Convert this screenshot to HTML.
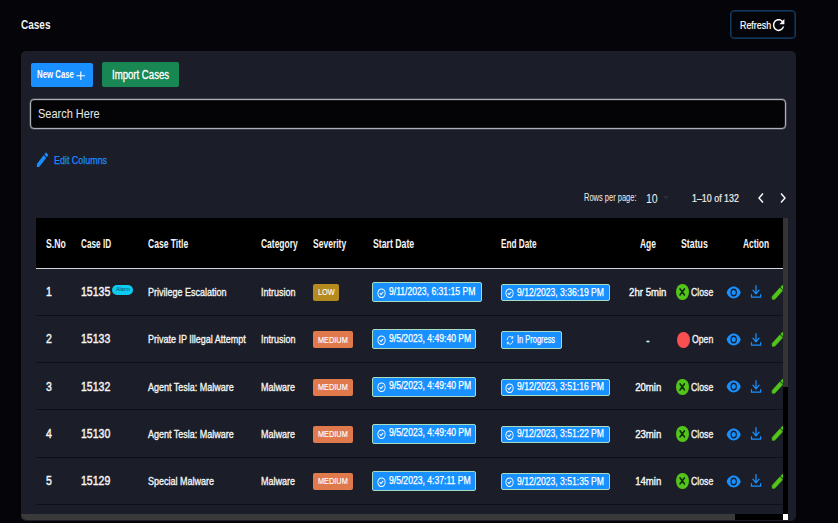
<!DOCTYPE html>
<html lang="en"><head><meta charset="utf-8"><title>Cases</title>
<style>
*{box-sizing:border-box;margin:0;padding:0}
html,body{width:838px;height:523px;overflow:hidden;background:#050509;font-family:"Liberation Sans",sans-serif;color:#fff}
.c{display:inline-block;white-space:nowrap;transform:scaleX(.8);transform-origin:0 50%}
.abs{position:absolute}
.title{position:absolute;left:20.600px;top:17px;font-size:13px;font-weight:bold;line-height:16px;color:#f2f2f2}
.title .c{transform:scaleX(.77)}
.refresh{position:absolute;left:730px;top:10px;width:66px;height:29px;border:1px solid #11375d;box-shadow:inset 0 0 0 .700px #0e2f52;border-radius:4px;background:#050509}
.refresh .c{position:absolute;left:9px;top:6px;font-size:11.500px;line-height:16px;transform:scaleX(.772);-webkit-text-stroke:.2px #fff}
.refresh svg{position:absolute;left:39.100px;top:4.500px}
.card{position:absolute;left:21px;top:51px;width:775px;height:470px;background:#1b1e28;border-radius:5px;overflow:hidden}
.btn{position:absolute;border-radius:2px;color:#fff;font-weight:bold}
.new{left:9.500px;top:12px;width:62.200px;height:24px;background:#1890ff}
.new .c{position:absolute;left:6.5px;top:4px;font-size:10.5px;line-height:14px;transform:scaleX(.745)}
.new svg{position:absolute;left:45px;top:7.600px}
.imp{left:80.5px;top:11px;width:77px;height:25px;background:#198754}
.imp .c{position:absolute;left:10px;top:5px;font-size:12px;line-height:16px;font-weight:normal;transform:scaleX(.80);-webkit-text-stroke:.3px #fff}
.search{position:absolute;left:9px;top:48px;width:756px;height:30px;border:1px solid #aeb0b6;box-shadow:0 0 0 .5px rgba(150,152,160,.55),inset 0 0 0 .5px rgba(150,152,160,.35);border-radius:4px;background:#040407}
.search .c{position:absolute;left:7px;top:6px;font-size:13px;line-height:16px;color:#e8e8ea;transform:scaleX(.845)}
.editc{position:absolute;left:16px;top:101px;color:#1a8cff}
.editc svg{position:absolute;left:-1.900px;top:-2.300px}
.editc .c{position:absolute;left:17px;top:1px;font-size:11.5px;line-height:14px;transform:scaleX(.776);-webkit-text-stroke:.25px #1a8cff}
.pag{position:absolute;top:140px;font-size:10px;line-height:14px;color:#f0f0f0}
.tbl{position:absolute;left:36px;top:218px;width:747px;height:296px;overflow:hidden;background:#1b1e28}
.thead{position:absolute;left:0;top:0;width:747px;height:51px;background:#000;border-bottom:1px solid #d4d6d9}
.th{position:absolute;top:17.500px;font-size:12px;line-height:16px;font-weight:bold;color:#f4f4f4;transform:scaleX(.78)}
.tr{position:absolute;left:0;width:747px;height:47.900px;border-bottom:1.200px solid #0e1016}
.td{position:absolute;top:16px;font-size:11.600px;line-height:16px;color:#f6f6f6;transform:scaleX(.775);-webkit-text-stroke:.35px #f6f6f6}
.td.st{transform:scaleX(.75)}
.td.id{font-size:12px;-webkit-text-stroke:.4px #f6f6f6;transform:scaleX(.878)}
.alarm{position:absolute;left:76px;top:17px;width:20.5px;height:9.5px;border-radius:5px;background:#0dcaf0;color:#0a3d4a;overflow:hidden}
.alarm .c{position:absolute;left:3.500px;top:1.200px;font-size:5.800px;line-height:7px;transform:scaleX(.93);color:#0a4a5c}
.sev{position:absolute;left:276.5px;top:16px;height:17px;border-radius:2px;color:#fff}
.sev .c{position:absolute;left:5.500px;top:2.400px;font-size:9.600px;line-height:12px;transform:scaleX(.765);-webkit-text-stroke:.15px #fff}
.sev.low{width:26.5px;background:#b58a1f}
.sev.medium{width:40px;background:#e07a4d}
.chip{position:absolute;background:#1890ff;border:1px solid #a7dcc0;border-radius:2px;color:#fff;white-space:nowrap;font-weight:bold}
.chip.sd{left:336px;top:14px;height:20px}
.chip.sd .ico{position:absolute;left:3.500px;top:4.600px}
.chip.sd .ct{position:absolute;left:15.900px;top:2.500px;font-size:10px;line-height:12px;font-weight:normal;-webkit-text-stroke:.25px #fff;display:inline-block;transform:scaleX(.86);transform-origin:0 50%}
.chip.ed{left:465px;top:16px;height:17.300px;width:109px}
.chip.ed.ip{width:60.500px}
.chip.ed .ico{position:absolute;left:3.300px;top:3.100px}
.chip.ed.ip .ico{left:4px;top:3px}
.chip.ed .ce{position:absolute;left:15.200px;top:1.700px;font-size:10px;line-height:12px;font-weight:normal;-webkit-text-stroke:.25px #fff;transform:scaleX(.86)}
.chip.ed.ip .ce{transform:scaleX(.745)}
.age{position:absolute;left:572px;width:80px;top:16.300px;text-align:center;font-size:11.200px;line-height:16px;color:#f6f6f6;-webkit-text-stroke:.4px #f6f6f6}
.cc{transform-origin:50% 50%;transform:scaleX(.857)}
.dot{position:absolute;left:640.400px;top:16.300px;width:12.400px;height:15.800px;border-radius:50%}
.dot svg{position:absolute;left:0;top:0;width:12.400px;height:15.800px}
.dot.close{background:#52c41a}
.dot.open{background:#fa4f50;left:641px;width:12.800px;height:16.200px}
.eye{position:absolute;left:690.300px;top:14.950px}
.dl{position:absolute;left:713.900px;top:17.300px}
.pen{position:absolute;left:734px;top:14.500px}

</style></head><body>
<div class="title"><span class="c">Cases</span></div>
<div class="refresh"><span class="c">Refresh</span>
<svg viewBox="0 0 24 24" width="17.250" height="18.200" preserveAspectRatio="none"><path fill="#fff" d="M17.650 6.350C16.200 4.900 14.210 4 12 4c-4.420 0-7.990 3.580-7.990 8s3.570 8 7.990 8c3.730 0 6.840-2.550 7.730-6h-2.080c-.820 2.330-3.040 4-5.650 4-3.310 0-6-2.690-6-6s2.690-6 6-6c1.660 0 3.140.690 4.220 1.780L13 11h7V4l-2.350 2.350z"/></svg>
</div>
<div class="card">
<div class="btn new"><span class="c">New Case</span><svg viewBox="0 0 10 10" width="9.600" height="9.600"><path d="M5 .5v9M.5 5h9" stroke="#fff" stroke-width="1.150"/></svg></div>
<div class="btn imp"><span class="c">Import Cases</span></div>
<div class="search"><span class="c">Search Here</span></div>
<div class="editc"><svg viewBox="0 0 24 24" width="15" height="19.500" preserveAspectRatio="none"><path fill="#1a8cff" d="M3 17.250V21h3.750L17.810 9.940l-3.750-3.750L3 17.250zM20.710 7.040a.996.996 0 0 0 0-1.410l-2.340-2.340a.996.996 0 0 0-1.410 0l-1.830 1.830 3.750 3.750 1.830-1.830z"/></svg><span class="c">Edit Columns</span></div>
<span class="c pag" style="left:563.300px;transform:scaleX(.75)">Rows per page:</span>
<span class="c pag" style="left:625.300px;font-size:12px;top:140.500px;transform:scaleX(.88)">10</span>
<svg class="abs" style="left:642px;top:145px" viewBox="0 0 10 6" width="6" height="3.500"><path d="M0 0h10L5 6z" fill="#2b2e39"/></svg>
<span class="c pag" style="left:671px;font-size:10.500px;transform:scaleX(.845);-webkit-text-stroke:.2px #f0f0f0">1–10 of 132</span>
<svg class="abs" style="left:736px;top:141px" viewBox="0 0 8 12" width="8" height="12"><path d="M6 1.500L2 6l4 4.500" fill="none" stroke="#fff" stroke-width="1.400"/></svg>
<svg class="abs" style="left:758px;top:141px" viewBox="0 0 8 12" width="8" height="12"><path d="M2 1.500L6 6l-4 4.500" fill="none" stroke="#fff" stroke-width="1.400"/></svg>
</div>
<div class="tbl">
<div class="thead">
<span class="c th" style="left:10.3px;transform:scaleX(0.725)">S.No</span>
<span class="c th" style="left:45.0px;transform:scaleX(0.684)">Case ID</span>
<span class="c th" style="left:111.6px;transform:scaleX(0.711)">Case Title</span>
<span class="c th" style="left:225.3px;transform:scaleX(0.705)">Category</span>
<span class="c th" style="left:277.0px;transform:scaleX(0.711)">Severity</span>
<span class="c th" style="left:336.5px;transform:scaleX(0.727)">Start Date</span>
<span class="c th" style="left:465.3px;transform:scaleX(0.686)">End Date</span>
<span class="c th" style="left:603.5px;transform:scaleX(0.705)">Age</span>
<span class="c th" style="left:645.2px;transform:scaleX(0.731)">Status</span>
<span class="c th" style="left:707.0px;transform:scaleX(0.697)">Action</span>
</div>
<div class="tr" style="top:50.00px">
<span class="c td id" style="left:10.300px">1</span>
<span class="c td id" style="left:44.8px">15135</span>
<span class="alarm"><span class="c">Alarm</span></span>
<span class="c td" style="left:111.7px">Privilege Escalation</span>
<span class="c td" style="left:225.3px">Intrusion</span>
<span class="sev low"><span class="c">LOW</span></span>
<span class="chip sd" style="width:110px"><svg class="ico" viewBox="0 0 16 16" width="9" height="10.500" preserveAspectRatio="none"><circle cx="8" cy="8" r="6.500" fill="none" stroke="#fff" stroke-width="1.600"/><path d="M5.300 8.300l1.900 1.900 3.400-3.800" fill="none" stroke="#fff" stroke-width="1.600" stroke-linecap="round" stroke-linejoin="round"/></svg><span class="ct">9/11/2023, 6:31:15 PM</span></span>
<span class="chip ed"><svg class="ico" viewBox="0 0 16 16" width="9" height="10.500" preserveAspectRatio="none"><circle cx="8" cy="8" r="6.500" fill="none" stroke="#fff" stroke-width="1.600"/><path d="M5.300 8.300l1.900 1.900 3.400-3.800" fill="none" stroke="#fff" stroke-width="1.600" stroke-linecap="round" stroke-linejoin="round"/></svg><span class="c ce">9/12/2023, 3:36:19 PM</span></span>
<span class="age"><span class="c cc">2hr 5min</span></span>
<span class="dot close"><svg viewBox="0 0 12 12" preserveAspectRatio="none"><path d="M3.900 3.700l4.300 4.600M8.200 3.700l-4.300 4.600" stroke="#0c2b06" stroke-width="1.400" stroke-linecap="round"/></svg></span>
<span class="c td st" style="left:654.6px">Close</span>
<svg class="eye" viewBox="0 0 24 24" width="15.400" height="19" preserveAspectRatio="none"><path fill="#1890ff" fill-rule="evenodd" d="M1 12C2.730 7.610 7 4.500 12 4.500s9.270 3.110 11 7.500c-1.730 4.390-6 7.500-11 7.500S2.730 16.390 1 12zM12 7a5 5 0 1 0 0 10 5 5 0 0 0 0-10z"/><circle cx="12" cy="12" r="3.250" fill="#1890ff"/></svg><svg class="dl" viewBox="0 0 16 16" width="12" height="14.300" preserveAspectRatio="none"><path d="M8 .800v9.200M3.900 5.800L8 10l4.100-4.200" fill="none" stroke="#1890ff" stroke-width="1.250" stroke-linecap="round" stroke-linejoin="round" vector-effect="non-scaling-stroke"/><path d="M2 10.800v2.800h12.200v-2.800" fill="none" stroke="#1890ff" stroke-width="1.250" stroke-linecap="round" stroke-linejoin="round" vector-effect="non-scaling-stroke"/></svg><svg class="pen" viewBox="0 0 24 24" width="17" height="18.700" preserveAspectRatio="none"><path fill="#52c41a" stroke="#52c41a" stroke-width=".700" stroke-linejoin="round" d="M3 17.250V21h3.750L17.810 9.940l-3.750-3.750L3 17.250zM20.710 7.040a.996.996 0 0 0 0-1.410l-2.340-2.340a.996.996 0 0 0-1.410 0l-1.830 1.830 3.750 3.750 1.830-1.830z"/></svg>
</div>
<div class="tr" style="top:97.25px">
<span class="c td id" style="left:10.300px">2</span>
<span class="c td id" style="left:44.8px">15133</span>
<span class="c td" style="left:111.7px">Private IP Illegal Attempt</span>
<span class="c td" style="left:225.3px">Intrusion</span>
<span class="sev medium"><span class="c">MEDIUM</span></span>
<span class="chip sd" style="width:104.3px"><svg class="ico" viewBox="0 0 16 16" width="9" height="10.500" preserveAspectRatio="none"><circle cx="8" cy="8" r="6.500" fill="none" stroke="#fff" stroke-width="1.600"/><path d="M5.300 8.300l1.900 1.900 3.400-3.800" fill="none" stroke="#fff" stroke-width="1.600" stroke-linecap="round" stroke-linejoin="round"/></svg><span class="ct">9/5/2023, 4:49:40 PM</span></span>
<span class="chip ed ip"><svg class="ico" viewBox="0 0 16 16" width="8" height="10.500" preserveAspectRatio="none"><path d="M2.2 7.2A5.9 5.9 0 0 1 13 4.6M13.8 8.8A5.9 5.9 0 0 1 3 11.4" fill="none" stroke="#fff" stroke-width="1.4" stroke-linecap="round"/><path d="M13.4 2.2v2.8h-2.8M2.6 13.8v-2.8h2.8" fill="none" stroke="#fff" stroke-width="1.4" stroke-linecap="round" stroke-linejoin="round"/></svg><span class="c ce">In Progress</span></span>
<span class="age"><span class="c cc">-</span></span>
<span class="dot open"></span>
<span class="c td st" style="left:655.5px">Open</span>
<svg class="eye" viewBox="0 0 24 24" width="15.400" height="19" preserveAspectRatio="none"><path fill="#1890ff" fill-rule="evenodd" d="M1 12C2.730 7.610 7 4.500 12 4.500s9.270 3.110 11 7.500c-1.730 4.390-6 7.500-11 7.500S2.730 16.390 1 12zM12 7a5 5 0 1 0 0 10 5 5 0 0 0 0-10z"/><circle cx="12" cy="12" r="3.250" fill="#1890ff"/></svg><svg class="dl" viewBox="0 0 16 16" width="12" height="14.300" preserveAspectRatio="none"><path d="M8 .800v9.200M3.900 5.800L8 10l4.100-4.200" fill="none" stroke="#1890ff" stroke-width="1.250" stroke-linecap="round" stroke-linejoin="round" vector-effect="non-scaling-stroke"/><path d="M2 10.800v2.800h12.200v-2.800" fill="none" stroke="#1890ff" stroke-width="1.250" stroke-linecap="round" stroke-linejoin="round" vector-effect="non-scaling-stroke"/></svg><svg class="pen" viewBox="0 0 24 24" width="17" height="18.700" preserveAspectRatio="none"><path fill="#52c41a" stroke="#52c41a" stroke-width=".700" stroke-linejoin="round" d="M3 17.250V21h3.750L17.810 9.940l-3.750-3.750L3 17.250zM20.710 7.040a.996.996 0 0 0 0-1.410l-2.340-2.340a.996.996 0 0 0-1.410 0l-1.830 1.830 3.750 3.750 1.830-1.830z"/></svg>
</div>
<div class="tr" style="top:144.50px">
<span class="c td id" style="left:10.300px">3</span>
<span class="c td id" style="left:44.8px">15132</span>
<span class="c td" style="left:111.7px">Agent Tesla: Malware</span>
<span class="c td" style="left:225.3px">Malware</span>
<span class="sev medium"><span class="c">MEDIUM</span></span>
<span class="chip sd" style="width:104.3px"><svg class="ico" viewBox="0 0 16 16" width="9" height="10.500" preserveAspectRatio="none"><circle cx="8" cy="8" r="6.500" fill="none" stroke="#fff" stroke-width="1.600"/><path d="M5.300 8.300l1.900 1.900 3.400-3.800" fill="none" stroke="#fff" stroke-width="1.600" stroke-linecap="round" stroke-linejoin="round"/></svg><span class="ct">9/5/2023, 4:49:40 PM</span></span>
<span class="chip ed"><svg class="ico" viewBox="0 0 16 16" width="9" height="10.500" preserveAspectRatio="none"><circle cx="8" cy="8" r="6.500" fill="none" stroke="#fff" stroke-width="1.600"/><path d="M5.300 8.300l1.900 1.900 3.400-3.800" fill="none" stroke="#fff" stroke-width="1.600" stroke-linecap="round" stroke-linejoin="round"/></svg><span class="c ce">9/12/2023, 3:51:16 PM</span></span>
<span class="age"><span class="c cc">20min</span></span>
<span class="dot close"><svg viewBox="0 0 12 12" preserveAspectRatio="none"><path d="M3.900 3.700l4.300 4.600M8.200 3.700l-4.300 4.600" stroke="#0c2b06" stroke-width="1.400" stroke-linecap="round"/></svg></span>
<span class="c td st" style="left:654.6px">Close</span>
<svg class="eye" viewBox="0 0 24 24" width="15.400" height="19" preserveAspectRatio="none"><path fill="#1890ff" fill-rule="evenodd" d="M1 12C2.730 7.610 7 4.500 12 4.500s9.270 3.110 11 7.500c-1.730 4.390-6 7.500-11 7.500S2.730 16.390 1 12zM12 7a5 5 0 1 0 0 10 5 5 0 0 0 0-10z"/><circle cx="12" cy="12" r="3.250" fill="#1890ff"/></svg><svg class="dl" viewBox="0 0 16 16" width="12" height="14.300" preserveAspectRatio="none"><path d="M8 .800v9.200M3.900 5.800L8 10l4.100-4.200" fill="none" stroke="#1890ff" stroke-width="1.250" stroke-linecap="round" stroke-linejoin="round" vector-effect="non-scaling-stroke"/><path d="M2 10.800v2.800h12.200v-2.800" fill="none" stroke="#1890ff" stroke-width="1.250" stroke-linecap="round" stroke-linejoin="round" vector-effect="non-scaling-stroke"/></svg><svg class="pen" viewBox="0 0 24 24" width="17" height="18.700" preserveAspectRatio="none"><path fill="#52c41a" stroke="#52c41a" stroke-width=".700" stroke-linejoin="round" d="M3 17.250V21h3.750L17.810 9.940l-3.750-3.750L3 17.250zM20.710 7.040a.996.996 0 0 0 0-1.410l-2.340-2.340a.996.996 0 0 0-1.410 0l-1.830 1.830 3.750 3.750 1.830-1.830z"/></svg>
</div>
<div class="tr" style="top:191.75px">
<span class="c td id" style="left:10.300px">4</span>
<span class="c td id" style="left:44.8px">15130</span>
<span class="c td" style="left:111.7px">Agent Tesla: Malware</span>
<span class="c td" style="left:225.3px">Malware</span>
<span class="sev medium"><span class="c">MEDIUM</span></span>
<span class="chip sd" style="width:104.3px"><svg class="ico" viewBox="0 0 16 16" width="9" height="10.500" preserveAspectRatio="none"><circle cx="8" cy="8" r="6.500" fill="none" stroke="#fff" stroke-width="1.600"/><path d="M5.300 8.300l1.900 1.900 3.400-3.800" fill="none" stroke="#fff" stroke-width="1.600" stroke-linecap="round" stroke-linejoin="round"/></svg><span class="ct">9/5/2023, 4:49:40 PM</span></span>
<span class="chip ed"><svg class="ico" viewBox="0 0 16 16" width="9" height="10.500" preserveAspectRatio="none"><circle cx="8" cy="8" r="6.500" fill="none" stroke="#fff" stroke-width="1.600"/><path d="M5.300 8.300l1.900 1.900 3.400-3.800" fill="none" stroke="#fff" stroke-width="1.600" stroke-linecap="round" stroke-linejoin="round"/></svg><span class="c ce">9/12/2023, 3:51:22 PM</span></span>
<span class="age"><span class="c cc">23min</span></span>
<span class="dot close"><svg viewBox="0 0 12 12" preserveAspectRatio="none"><path d="M3.900 3.700l4.300 4.600M8.200 3.700l-4.300 4.600" stroke="#0c2b06" stroke-width="1.400" stroke-linecap="round"/></svg></span>
<span class="c td st" style="left:654.6px">Close</span>
<svg class="eye" viewBox="0 0 24 24" width="15.400" height="19" preserveAspectRatio="none"><path fill="#1890ff" fill-rule="evenodd" d="M1 12C2.730 7.610 7 4.500 12 4.500s9.270 3.110 11 7.500c-1.730 4.390-6 7.500-11 7.500S2.730 16.390 1 12zM12 7a5 5 0 1 0 0 10 5 5 0 0 0 0-10z"/><circle cx="12" cy="12" r="3.250" fill="#1890ff"/></svg><svg class="dl" viewBox="0 0 16 16" width="12" height="14.300" preserveAspectRatio="none"><path d="M8 .800v9.200M3.900 5.800L8 10l4.100-4.200" fill="none" stroke="#1890ff" stroke-width="1.250" stroke-linecap="round" stroke-linejoin="round" vector-effect="non-scaling-stroke"/><path d="M2 10.800v2.800h12.200v-2.800" fill="none" stroke="#1890ff" stroke-width="1.250" stroke-linecap="round" stroke-linejoin="round" vector-effect="non-scaling-stroke"/></svg><svg class="pen" viewBox="0 0 24 24" width="17" height="18.700" preserveAspectRatio="none"><path fill="#52c41a" stroke="#52c41a" stroke-width=".700" stroke-linejoin="round" d="M3 17.250V21h3.750L17.810 9.940l-3.750-3.750L3 17.250zM20.710 7.040a.996.996 0 0 0 0-1.410l-2.340-2.340a.996.996 0 0 0-1.410 0l-1.830 1.830 3.750 3.750 1.830-1.830z"/></svg>
</div>
<div class="tr" style="top:239.00px">
<span class="c td id" style="left:10.300px">5</span>
<span class="c td id" style="left:44.8px">15129</span>
<span class="c td" style="left:111.7px">Special Malware</span>
<span class="c td" style="left:225.3px">Malware</span>
<span class="sev medium"><span class="c">MEDIUM</span></span>
<span class="chip sd" style="width:104.3px"><svg class="ico" viewBox="0 0 16 16" width="9" height="10.500" preserveAspectRatio="none"><circle cx="8" cy="8" r="6.500" fill="none" stroke="#fff" stroke-width="1.600"/><path d="M5.300 8.300l1.900 1.900 3.400-3.800" fill="none" stroke="#fff" stroke-width="1.600" stroke-linecap="round" stroke-linejoin="round"/></svg><span class="ct">9/5/2023, 4:37:11 PM</span></span>
<span class="chip ed"><svg class="ico" viewBox="0 0 16 16" width="9" height="10.500" preserveAspectRatio="none"><circle cx="8" cy="8" r="6.500" fill="none" stroke="#fff" stroke-width="1.600"/><path d="M5.300 8.300l1.900 1.900 3.400-3.800" fill="none" stroke="#fff" stroke-width="1.600" stroke-linecap="round" stroke-linejoin="round"/></svg><span class="c ce">9/12/2023, 3:51:35 PM</span></span>
<span class="age"><span class="c cc">14min</span></span>
<span class="dot close"><svg viewBox="0 0 12 12" preserveAspectRatio="none"><path d="M3.900 3.700l4.300 4.600M8.200 3.700l-4.300 4.600" stroke="#0c2b06" stroke-width="1.400" stroke-linecap="round"/></svg></span>
<span class="c td st" style="left:654.6px">Close</span>
<svg class="eye" viewBox="0 0 24 24" width="15.400" height="19" preserveAspectRatio="none"><path fill="#1890ff" fill-rule="evenodd" d="M1 12C2.730 7.610 7 4.500 12 4.500s9.270 3.110 11 7.500c-1.730 4.390-6 7.500-11 7.500S2.730 16.390 1 12zM12 7a5 5 0 1 0 0 10 5 5 0 0 0 0-10z"/><circle cx="12" cy="12" r="3.250" fill="#1890ff"/></svg><svg class="dl" viewBox="0 0 16 16" width="12" height="14.300" preserveAspectRatio="none"><path d="M8 .800v9.200M3.900 5.800L8 10l4.100-4.200" fill="none" stroke="#1890ff" stroke-width="1.250" stroke-linecap="round" stroke-linejoin="round" vector-effect="non-scaling-stroke"/><path d="M2 10.800v2.800h12.200v-2.800" fill="none" stroke="#1890ff" stroke-width="1.250" stroke-linecap="round" stroke-linejoin="round" vector-effect="non-scaling-stroke"/></svg><svg class="pen" viewBox="0 0 24 24" width="17" height="18.700" preserveAspectRatio="none"><path fill="#52c41a" stroke="#52c41a" stroke-width=".700" stroke-linejoin="round" d="M3 17.250V21h3.750L17.810 9.940l-3.750-3.750L3 17.250zM20.710 7.040a.996.996 0 0 0 0-1.410l-2.340-2.340a.996.996 0 0 0-1.410 0l-1.830 1.830 3.750 3.750 1.830-1.830z"/></svg>
</div>
<div class="tr" style="top:286.250px;border:0"></div>
</div>
<div class="abs" style="left:783px;top:218px;width:5.300px;height:296px;background:#000"></div>
<div class="abs" style="left:783.200px;top:218px;width:4.900px;height:168.500px;background:#343434"></div>
<div class="abs" style="left:21px;top:514.300px;width:762px;height:6.200px;background:#000;border-bottom-left-radius:5px"></div>
<div class="abs" style="left:21px;top:514.300px;width:714px;height:6.200px;background:#3a3a3a;border-bottom-left-radius:5px"></div>
<div class="abs" style="left:783px;top:514.300px;width:5.300px;height:6.200px;background:#fff"></div>
</body></html>
